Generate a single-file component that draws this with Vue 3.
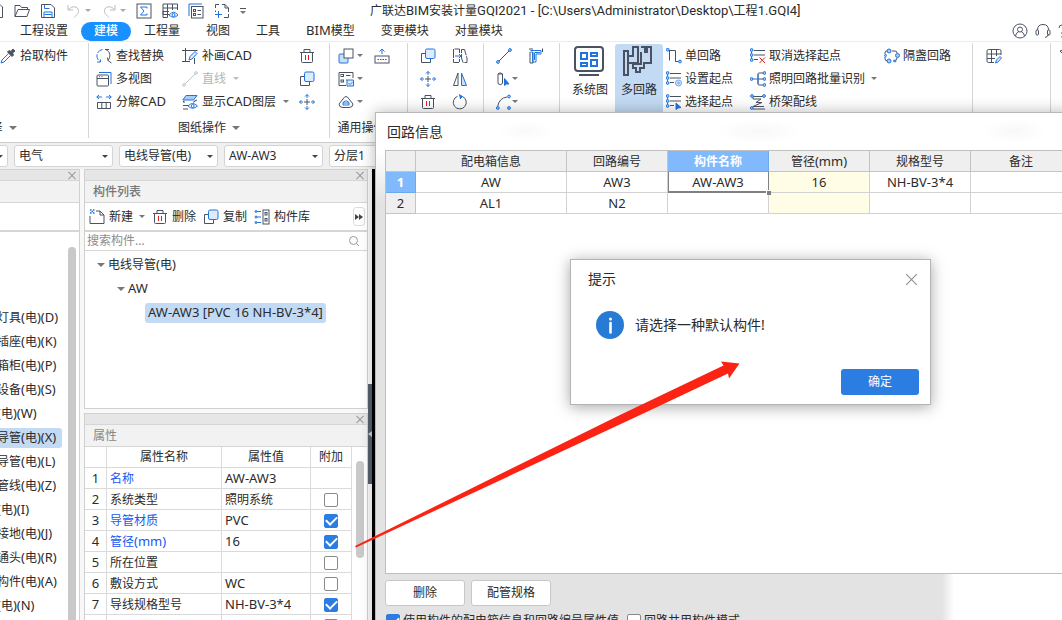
<script setup>
import { h, ref } from 'vue'

const G = '#4a5262'
const B = '#1f74e0'

// Splits mixed text so that Latin runs use their own size beside the Chinese ones
const T = (props) =>
  h('span', { class: 'txt' }, props.v.split(/([\x20-\x7e]+)/).filter(Boolean).map((run) =>
    /^[\x20-\x7e]+$/.test(run) ? h('span', { class: 'lat' }, run) : run))
T.props = ['v']

const dot = (x, y, r = 1.4) => `<circle cx="${x}" cy="${y}" r="${r}" stroke="${B}" fill="#a9cdfa"/>`
const trash = `<path d="M1 4.5H15M5 4V1.5H11V4M2.500 4.500V13.500Q2.500 14.500 3.500 14.500H12.500Q13.500 14.500 13.500 13.500V4.500"/><path d="M6.500 7V12M9.500 7V12" stroke="#e02020"/>`
const copy = `<path d="M6 5.500H1.500V14.500H10.500V10"/><rect x="5.500" y="1" width="9.500" height="9.500" rx="1.500" stroke="${B}" fill="#dcebfd"/>`
const move = `<path d="M5 8H11M8 5V11"/><path d="M8 0.500V4M8 12V15.500M.5 8H4M12 8H15.500M6 2.500 8 .5 10 2.500M6 13.500 8 15.500 10 13.500M2.500 6 .5 8 2.500 10M13.500 6 15.500 8 13.500 10" stroke="${B}"/>`
const startList = `<path d="M4 2.500H15M4 7H15M4 11.500H8"/><path d="M1.500 3V11.500" stroke="${B}"/>${dot(1.6, 2)}${dot(1.6, 7)}${dot(1.6, 12)}`

const icons = {
  open: `<path d="M1 13.500V2.500H6L7.500 4.500H13.500V6.500M1 13.500 4 6.500H15.500L13 13.500Z"/>`,
  save: `<path d="M1.500 1.500H11L14.500 5V14.500H1.500Z"/><path d="M4.500 2V5.500H9.500M4 14V9H12V14M4.500 11.500H11.500" stroke="${B}"/>`,
  undo: `<path d="M2 2V7H7M2.500 6.500C6 2.500 12 3 12.500 7.500C13 11 10 12 8 14.500" stroke="#b9bcc2"/>`,
  redo: `<path d="M14 2V7H9M13.500 6.500C10 2.500 4 3 3.500 7.500C3 11 6 12 8 14.500" stroke="#b9bcc2"/>`,
  sigma: `<rect x="1" y="1" width="14" height="14"/><path d="M11 5.500V4H4.500L8 8 4.500 12H11V10.500" stroke="${B}"/>`,
  gridEye: `<path d="M8 11.500H1V1H15.500V7M1 5H15.500M1 8.500H7M5.500 1V14.500H1V8M10.500 1V7"/><path d="M7 12Q11.500 6.500 16 12Q11.500 16.500 7 12Z" stroke="${B}"/><circle cx="11.500" cy="12" r="1.500" stroke="${B}"/>`,
  listBox: `<rect x="3.500" y="3.500" width="11.500" height="11.500"/><path d="M1 13V1H14" stroke="${B}"/><path d="M9.500 7.500H13M9.500 11.500H13"/><rect x="5.500" y="6.500" width="2" height="2"/><rect x="5.500" y="10.500" width="2" height="2"/>`,
  scanPlus: `<path d="M1.500 5V1.500H5M8 1.500H11L14.500 5V9M11 1.500V5H14.500M14.500 11V14.500H10M1.500 7.500V9"/><path d="M4.500 8V15M1 11.500H8" stroke="${B}"/>`,
  dropper: `<path d="M8.500 5.500 2 12 1 15 4 14 10.500 7.500" stroke="${B}"/><path d="M9 2.500 11 3.500 13 1 15 3 12.500 5 13.500 7 12 8.500 7.500 4Z" fill="${G}"/>`,
  find: `<path d="M6.500 1.500A6.500 6.500 0 0 0 4 13.500M1 14H4.500V10.500" stroke="${B}" stroke-dasharray="6 1.500"/><path d="M9.500 1.500C14.500 3 15 9 12 12.500M9 1.500H13M11.500 9.500 12 12.500 15.500 15"/>`,
  windows: `<rect x="1" y="4" width="11.500" height="11" rx="1"/><path d="M1 7.500H12.500M3 5.700H4M5.500 5.700H6.500"/><path d="M3 1.500H15V13" stroke="${B}"/>`,
  explode: `<path d="M1.500 14.500V8.500H14.500V14.500M1.500 14.500H14.500M5.800 9V14M10.200 9V14"/><path d="M.8 3H6M3 1 .8 3 3 5M15.200 3H10M13 1 15.200 3 13 5" stroke="${B}"/>`,
  patch: `<path d="M0 2.500H15.500M3.500 0V14M0 13.500H8M12.500 10V16"/><path d="M7 12 8 8.500 13 3.500 15 5.500 10 11Z" stroke="${B}" fill="#dcebfd"/>`,
  lineOff: `<path d="M3 13 13 3" stroke="#bfc2c7"/><circle cx="2" cy="14" r="1.300" stroke="#bfc2c7"/><circle cx="14" cy="2" r="1.300" stroke="#bfc2c7"/>`,
  layers: `<path d="M4 1.500H15L11.500 6H.8Z" stroke="${B}" fill="#a9cdfa"/><path d="M3 8H1L2 7M11 8.500 13.500 6.500M1 11.500H6M12 7.500 15 6M1 15H6"/><path d="M6 12Q10.500 7 15.500 12Q10.500 16.500 6 12Z" stroke="${B}"/><circle cx="10.700" cy="12" r="1.500" stroke="${B}"/>`,
  trash,
  copy,
  move,
  copyBack: `<rect x="1" y="6" width="9" height="9" rx="1" stroke="${B}" fill="#c9e0fb"/><rect x="6" y="1" width="9" height="9" fill="#fff"/>`,
  form: `<path d="M8 14.500H1V1.500H15V7M8 4.500H12.500M8 9H9"/><rect x="3" y="3.500" width="2.500" height="2"/><rect x="3" y="9" width="2.500" height="2"/><path d="M9 9H15.500V15H9ZM10.500 12 12 13.500 14.500 11" stroke="${B}" fill="#dcebfd"/>`,
  cap: `<path d="M5 5Q8 0 11 5L15 10Q15 13.500 11 13.500H5Q1 13.500 1 10Z"/><path d="M5 11V8.500L7 7H9L11 8.500V11ZM5 9H11" stroke="${B}"/>`,
  keyUp: `<rect x="1" y="8" width="14" height="7"/><path d="M3.500 11.500H12.500" stroke-dasharray="1.500 1"/><path d="M8 6V1M5.500 3.500 8 1 10.500 3.500" stroke="${B}"/>`,
  stretch: `<path d="M7.500 5V1H1.500V14.500H7.500V11M9.500 1.500H12.500L15 10V14.500H11L9.500 10Z" stroke-dasharray="9 1"/><path d="M3 8H9M7 6 9 8 7 10" stroke="${B}"/>`,
  mirror: `<path d="M6 2V14.500H1.500Z"/><path d="M9.500 2V14.500H14.500Z" stroke="${B}" fill="#c9e0fb"/>`,
  rotate: `<path d="M10.500 2.500A6.500 6.500 0 1 1 5.500 2.300"/><path d="M7 .5 10.500 2.500 8 5" stroke="${B}" fill="${B}"/>`,
  line: `<path d="M3 13 13 3"/>${dot(2, 14)}${dot(14, 2)}`,
  pillar: `<path d="M2 3V12.500Q4 15 6.500 12.500V3ZM2 3Q4 .5 6.500 3"/><path d="M8.500 7.500V14.500L10.500 13 13 13Z" stroke="${B}" fill="${B}"/>`,
  arc: `<path d="M1.500 13Q3 4 11 3"/>${dot(1.800, 14)}${dot(13, 2.500)}${dot(13, 14)}`,
  pipe: `<path d="M1 1H5M2 4V15H5V4M14.500 4V.5"/><path d="M2.500 4H4.500V14H8V6H13V2.500H2.500M6.500 5V12M6.500 4.500H12" stroke="${B}"/>`,
  single: `<path d="M3.500 2.500V12.500M2.500 2.500H9.500V13.500H14" /><path d="M1 1.500H3" stroke="${B}"/>${dot(1.700, 1.700)}${dot(14, 13.500)}`,
  setStart: startList + `<circle cx="12.500" cy="12" r="3" stroke="#6aa5f2" fill="#dcebfd"/><circle cx="12.500" cy="12" r="1" stroke="#6aa5f2"/>`,
  pickStart: startList + `<path d="M10 9V15.500L12 14 15 13.500Z" stroke="${B}" fill="${B}"/>`,
  dropStart: startList + `<path d="M9.500 9.500 15 15M15 9.500 9.500 15" stroke="#e02020"/>`,
  branch: `<path d="M13 2H9Q8 2 8 3V13Q8 14 9 14H13M8 8H13" /><path d="M3 8H8V3M8 8V13" stroke="${B}"/>${dot(1.500, 8)}${dot(14.500, 2)}${dot(14.500, 8)}${dot(14.500, 14)}`,
  tray: `<path d="M3 2.500H14M3 2.500V5H11L6 8.500H12L3 12.500H14M3 15H15M1 14V15" />${dot(2, 2)}${dot(14, 2)}${dot(1.800, 14)}`,
  relay: `<path d="M4 3H2Q1 3 1 5V6M1 9V11Q1 13 4 13M8 3H11Q13 3 13 5M13 10Q13 13 9 13"/>${dot(5, 3, 2)}${dot(13.500, 7.500, 2)}${dot(5, 13, 2)}${dot(1.500, 7.500, 1)}${dot(11, 13, 1)}`,
  gridPen: `<path d="M8 14.500H2.500Q1 14.500 1 13V3Q1 1.500 2.500 1.500H13.500Q15 1.500 15 3V7M1 6H15M1 10.500H9M5.500 1.500V14.500M10.500 1.500V8"/><path d="M9.500 15 10.500 12 14 8.500 15.500 10 12 14Z" stroke="${B}" fill="#dcebfd"/>`,
  star: `<path d="M1 3 5 1.500M1 3 6 8"/>`,
  fresh: `<path d="M7 2H11L15 6V14.500H1V7M11 2V6H15"/><path d="M1 1H2.500M4 1H5.500M2.500 2.500H4M1 4H2.500M4 4H5.500" stroke="${B}" stroke-width="1.500"/>`,
  library: `<rect x="9" y="1" width="6" height="14"/><rect x="11" y="3.500" width="2" height="2.500"/><rect x="11" y="9.500" width="2" height="2.500"/><path d="M3 2.500H7M3 8H7M3 13.500H7" stroke="${B}"/>${dot(2, 2.500, 1)}${dot(2, 8, 1)}${dot(2, 13.500, 1)}`,
  user: `<circle cx="8" cy="8" r="7"/><circle cx="8" cy="6.500" r="2.500"/><path d="M3.500 13Q4 9.500 6.500 9M12.500 13Q12 9.500 9.500 9"/>`,
  headset: `<path d="M2.500 7Q2.500 1.500 8 1.500T13.500 7M13.500 11Q13 14 10 14.500"/><rect x="1" y="7" width="2.500" height="5" rx="1"/><rect x="12.500" y="7" width="2.500" height="5" rx="1"/>`,
  help: `<path d="M1 5Q1 2 4 2T7 5Q7 7 4 9V11M4 13V14.500"/>`,
  doc: `<path d="M-8 1.500H0L2.500 4V14.500H-8"/>`,
  search: `<circle cx="7.500" cy="7.500" r="4" stroke="#999"/><path d="M10.500 10.500 13 13" stroke="#999"/>`,
}

const quick = [
  { n: 'open' }, { n: 'save' }, { n: 'undo', c: 1 }, { n: 'redo', c: 1 },
  { n: 'sigma' }, { n: 'gridEye' }, { n: 'listBox' }, { n: 'scanPlus' },
]
const tabs = ['工程设置', '建模', '工程量', '视图', '工具', 'BIM模型', '变更模块', '对量模块']
const active = ref('建模')

const groups = [
  { k: 'g-pick', label: '选择', cols: [[{ i: 'dropper', t: '拾取构件' }]] },
  { k: 'g-draw', label: '图纸操作', cols: [
    [{ i: 'find', t: '查找替换' }, { i: 'windows', t: '多视图' }, { i: 'explode', t: '分解CAD' }],
    [{ i: 'patch', t: '补画CAD' }, { i: 'lineOff', t: '直线', c: 1, off: 1 }, { i: 'layers', t: '显示CAD图层', c: 1 }],
    [{ i: 'trash' }, { i: 'copy' }, { i: 'move' }],
  ] },
  { k: 'g-common', label: '通用操作', cols: [
    [{ i: 'copyBack', c: 1 }, { i: 'form', c: 1 }, { i: 'cap', c: 1 }],
    [{ i: 'keyUp' }],
  ] },
  { k: 'g-edit', cols: [
    [{ i: 'copy' }, { i: 'move' }, { i: 'trash' }],
    [{ i: 'stretch' }, { i: 'mirror' }, { i: 'rotate' }],
  ] },
  { k: 'g-line', cols: [
    [{ i: 'line' }, { i: 'pillar', c: 1 }, { i: 'arc', c: 1 }],
    [{ i: 'pipe' }],
  ] },
  { k: 'g-detect', big: true, cols: [
    [{ i: 'single', t: '单回路' }, { i: 'setStart', t: '设置起点' }, { i: 'pickStart', t: '选择起点' }],
    [{ i: 'dropStart', t: '取消选择起点' }, { i: 'branch', t: '照明回路批量识别', c: 1 }, { i: 'tray', t: '桥架配线' }],
    [{ i: 'relay', t: '隔盏回路' }],
  ] },
  { k: 'g-check', cols: [[{ i: 'gridPen' }]] },
  { k: 'g-last', cols: [[{ i: 'star' }]] },
]

const filters = ['首层', '电气', '电线导管(电)', 'AW-AW3', '分层1']

const kinds = ['照明灯具(电)(D)', '开关插座(电)(K)', '配电箱柜(电)(P)', '电气设备(电)(S)', '桥架(电)(W)',
  '电线导管(电)(X)', '电缆导管(电)(L)', '综合管线(电)(Z)', '母线(电)(I)', '防雷接地(电)(J)', '桥架通头(电)(R)',
  '零星构件(电)(A)', '孔洞(电)(N)']

const tools = [
  { i: 'fresh', t: '新建', c: 1 }, { i: 'trash', t: '删除' }, { i: 'copy', t: '复制' }, { i: 'library', t: '构件库' },
]

const props = ref([
  { n: '名称', v: 'AW-AW3', key: 1, on: null },
  { n: '系统类型', v: '照明系统', on: false },
  { n: '导管材质', v: 'PVC', key: 1, on: true },
  { n: '管径(mm)', v: '16', key: 1, on: true },
  { n: '所在位置', v: '', on: false },
  { n: '敷设方式', v: 'WC', on: false },
  { n: '导线规格型号', v: 'NH-BV-3*4', on: true },
  { n: '', v: '', on: false },
])

const heads = ['配电箱信息', '回路编号', '构件名称', '管径(mm)', '规格型号', '备注']
const rows = [['AW', 'AW3', 'AW-AW3', '16', 'NH-BV-3*4', ''], ['AL1', 'N2', '', '', '', '']]
const useProps = ref(true)
const shared = ref(false)
</script>

<template>
  <div class="app">
    <header class="titlebar">
      <div class="quick">
        <svg class="ic first" viewBox="0 0 4 16" v-html="icons.doc" />
        <button v-for="q in quick" :key="q.n" class="qbtn" :aria-label="q.n">
          <svg class="ic" viewBox="0 0 16 16" v-html="icons[q.n]" /><i v-if="q.c" class="caret pale" />
        </button>
        <button class="qbtn more" aria-label="more"><i class="bar" /><i class="caret" /></button>
      </div>
      <div class="title"><T v="广联达BIM安装计量GQI2021 - [C:\Users\Administrator\Desktop\工程1.GQI4]" /></div>
    </header>

    <nav class="tabs">
      <button v-for="t in tabs" :key="t" class="tab" :class="{ on: t === active }" @click="active = t"><T :v="t" /></button>
      <div class="account">
        <button v-for="n in ['user', 'headset', 'help']" :key="n" :aria-label="n"><svg class="ic" viewBox="0 0 16 16" v-html="icons[n]" /></button>
      </div>
    </nav>

    <section class="ribbon">
      <div v-for="g in groups" :key="g.k" class="group" :class="g.k">
        <div class="cols">
          <template v-if="g.big">
            <button class="big">
              <svg viewBox="0 0 32 32"><rect x="1" y="2" width="28" height="24" rx="3" fill="#fff" stroke="#4a5262" stroke-width="2" /><path d="M5 30H25" stroke="#4a5262" stroke-width="2" /><path d="M7 8H13V14H7ZM17 8H23V11H17ZM7 18H13V21H7ZM17 15H23V21H17Z" fill="none" stroke="#1f74e0" stroke-width="2" /></svg>
              <span>系统图</span>
            </button>
            <button class="big sel">
              <svg viewBox="0 0 32 32"><path d="M1 6H5V11H10V2H15V18H5V30H1ZM5 11V18M18 2H22V7H24V2H28V18H21V23H17V27H13V23H10V19H18V7" fill="none" stroke="#4a5262" stroke-width="2" /></svg>
              <span>多回路</span>
            </button>
          </template>
          <div v-for="(c, ci) in g.cols" :key="ci" class="col">
            <button v-for="b in c" :key="b.i" class="rbtn" :class="{ off: b.off }" :aria-label="b.t || b.i">
              <svg class="ic" viewBox="0 0 16 16" v-html="icons[b.i]" /><T v-if="b.t" :v="b.t" /><i v-if="b.c" class="caret" />
            </button>
          </div>
        </div>
        <div v-if="g.label" class="glabel"><span>{{ g.label }}</span><i class="caret wide" /></div>
      </div>
    </section>

    <div class="filters">
      <label v-for="f in filters" :key="f" class="combo">
        <select :aria-label="f"><option>{{ f }}</option></select><i class="caret dark" />
      </label>
    </div>

    <main class="work">
      <aside class="kinds">
        <div class="strip"><button class="x" aria-label="关闭" /></div>
        <div class="ptitle" />
        <div class="tools" />
        <div class="kindbox">
          <ul>
            <li v-for="k in kinds" :key="k" :class="{ on: k.endsWith('(X)') }"><T :v="k" /></li>
          </ul>
          <div class="thumb" />
        </div>
      </aside>

      <div class="middle">
        <section class="panel list">
          <div class="strip"><button class="x" aria-label="关闭" /></div>
          <h2 class="ptitle bold">构件列表</h2>
          <div class="tools">
            <button v-for="t in tools" :key="t.t" class="tool"><svg class="ic" viewBox="0 0 16 16" v-html="icons[t.i]" /><span>{{ t.t }}</span><i v-if="t.c" class="caret" /></button>
            <button class="next" aria-label="更多"><i /><i /></button>
          </div>
          <div class="search">
            <input type="text" placeholder="搜索构件..." aria-label="搜索构件">
            <svg class="ic" viewBox="0 0 16 16" v-html="icons.search" />
          </div>
          <div class="tree">
            <div class="node n1"><i class="caret wide" /><T v="电线导管(电)" /></div>
            <div class="node n2"><i class="caret wide" /><T v="AW" /></div>
            <div class="node n3"><T class="pick" v="AW-AW3 [PVC 16 NH-BV-3*4]" /></div>
          </div>
        </section>

        <section class="panel props">
          <div class="strip"><button class="x" aria-label="关闭" /></div>
          <h2 class="ptitle">属性</h2>
          <div class="propbox">
            <table>
              <colgroup><col class="p0"><col class="p1"><col class="p2"><col class="p3"></colgroup>
              <thead><tr><th /><th>属性名称</th><th>属性值</th><th>附加</th></tr></thead>
              <tbody>
                <tr v-for="(p, i) in props" :key="i">
                  <td class="mid"><T v-if="p.n" :v="String(i + 1)" /></td>
                  <td :class="{ key: p.key }"><T :v="p.n" /></td>
                  <td><T :v="p.v" /></td>
                  <td class="mid"><input v-if="p.on !== null" v-model="p.on" type="checkbox" :aria-label="p.n || '附加'"></td>
                </tr>
              </tbody>
            </table>
            <div class="rail"><div class="thumb" /></div>
          </div>
        </section>
      </div>

      <div class="splitter"><button aria-label="折叠" /></div>
      <div class="canvas" />
    </main>

    <section class="window" role="dialog" aria-label="回路信息">
      <h1>回路信息</h1>
      <div class="sheet">
        <table>
          <colgroup><col class="c0"><col class="c1"><col><col><col><col><col></colgroup>
          <thead><tr><th /><th v-for="t in heads" :key="t" :class="{ on: t === '构件名称' }"><T :v="t" /></th></tr></thead>
          <tbody>
            <tr v-for="(r, i) in rows" :key="i">
              <th :class="{ on: i === 0 }"><T :v="String(i + 1)" /></th>
              <td v-for="(c, j) in r" :key="j" :class="{ soft: j === 3, cell: i === 0 && j === 2 }"><T :v="c" /><i v-if="i === 0 && j === 2" class="grip" /></td>
            </tr>
          </tbody>
        </table>
      </div>
      <div class="actions"><button>删除</button><button>配管规格</button></div>
      <div class="options">
        <label><input v-model="useProps" type="checkbox"><span>使用构件的配电箱信息和回路编号属性值</span></label>
        <label><input v-model="shared" type="checkbox"><span>回路共用构件模式</span></label>
      </div>
    </section>

    <section class="prompt" role="alertdialog" aria-label="提示">
      <div class="phead"><span>提示</span><button class="x large" aria-label="关闭" /></div>
      <div class="pbody">
        <svg viewBox="0 0 28 28"><circle cx="14" cy="14" r="14" fill="#277bd5" /><circle cx="14.500" cy="8" r="1.500" fill="#fff" /><path d="M14.500 12V21.500" stroke="#fff" stroke-width="2.600" stroke-linecap="round" /></svg>
        <p>请选择一种默认构件!</p>
      </div>
      <div class="pfoot"><button>确定</button></div>
    </section>

    <svg class="pointer" width="400" height="200" viewBox="350 356 400 200" aria-hidden="true"><path d="M355 546 622 414 723.500 365.500 721 361.500 739.500 363.500 729 378.500 728 373.500 638 416 356 547.500Z" fill="#fb2314" /></svg>
  </div>
</template>

<style>
body { margin: 0; overflow: hidden; }
.txt { white-space: pre; }
.txt .lat { font-size: 13px; line-height: 1; }
.title .lat { font-family: Roboto, sans-serif; }
</style>

<style scoped>
.app { position: relative; display: flex; flex-direction: column; height: 100vh; overflow: hidden; background: #fff; color: #2b2b2b; font: 12px/16px "Noto Sans", "Noto Sans CJK SC", sans-serif; }
.app * { box-sizing: border-box; }
button { display: flex; align-items: center; padding: 0; border: 0; background: none; color: inherit; font: inherit; white-space: nowrap; }
.ic { flex: none; width: 16px; height: 16px; fill: none; stroke: #4a5262; stroke-width: 1; }
.caret { flex: none; width: 0; height: 0; border: 3px solid transparent; border-top-color: #777; border-bottom: 0; }
.caret.pale { border-top-color: #aaa; }
.caret.dark { border-top-color: #444; }
.caret.wide { border-width: 4px 4px 0; }

.titlebar { display: flex; align-items: center; flex: none; height: 21px; overflow: hidden; }
.quick { display: flex; align-items: center; gap: 10px; flex: none; width: 370px; }
.quick .first { width: 4px; }
.qbtn { gap: 3px; }
.more { flex-direction: column; gap: 2px; }
.bar { width: 6px; height: 1px; background: #555; }
.title { white-space: nowrap; }

.tabs { display: flex; align-items: center; flex: none; height: 21px; padding: 0 0 0 7px; border-bottom: 1px solid #ececec; }
.tab { height: 19px; padding: 0 13px; border-radius: 10px; }
.tab.on { background: #1890ff; color: #fff; font-weight: 500; }
.account { display: flex; gap: 7px; margin: 0 -12px 0 auto; }

.ribbon { display: flex; flex: none; height: 101px; border-bottom: 1px solid #ccc; overflow: hidden; }
.group { display: flex; flex-direction: column; flex: none; margin: 1px 0 4px; border-right: 1px solid #d6d6d6; }
.cols { display: flex; height: 72px; padding-top: 1px; }
.col { display: flex; flex-direction: column; }
.rbtn { gap: 4px; height: 23px; }
.rbtn .caret { margin-left: 3px; }
.rbtn.off { color: #b4b4b4; }
.rbtn.off .caret { border-top-color: #bbb; }
.glabel { display: flex; align-items: center; justify-content: center; gap: 6px; flex: 1; padding-top: 3px; }
.g-pick { width: 182px; margin-left: -93px; }
.g-pick .cols { padding-left: 93px; }
.g-draw { width: 241px; }
.g-draw .cols { padding-left: 7px; }
.g-draw .col:nth-child(1) { width: 86px; }
.g-draw .col:nth-child(2) { width: 117px; }
.g-common { width: 78px; }
.g-common .cols { padding-left: 8px; }
.g-common .col:nth-child(1) { width: 36px; }
.g-common .caret, .g-line .caret { margin-left: 0; }
.g-common .rbtn { gap: 3px; }
.g-edit { width: 76px; }
.g-edit .cols { padding-left: 12px; }
.g-edit .col:nth-child(1) { width: 32px; }
.g-line { width: 76px; }
.g-line .cols { padding-left: 12px; }
.g-line .col:nth-child(1) { width: 32px; }
.g-line .rbtn { gap: 0; }
.g-detect { width: 413px; }
.g-detect .cols { padding-left: 6px; }
.g-detect .col { width: 84px; }
.g-detect .big + .col { margin-left: 3px; }
.g-detect .col:nth-child(4) { width: 134px; }
.g-detect .rbtn { gap: 3px; }
.big { flex-direction: column; width: 48px; height: 76px; padding-top: 1px; border-radius: 3px; gap: 5px; }
.big svg { width: 32px; height: 32px; }
.big.sel { background: #c2daf3; }
.big + .big { margin-left: 1px; }
.g-check { width: 78px; }
.g-check .cols { padding-left: 13px; }
.g-last { width: 60px; border: 0; }
.g-last .cols { padding-left: 8px; }

.filters { display: flex; align-items: center; gap: 6px; flex: none; height: 26px; padding-left: 14px; background: #f0f0f0; overflow: hidden; }
.combo { display: grid; align-items: center; flex: none; width: 99px; }
.combo:first-child { margin-left: -105px; }
.combo > * { grid-area: 1 / 1; }
.combo .caret { justify-self: end; margin-right: 5px; }
select { appearance: none; width: 100%; height: 22px; padding: 0 4px; border: 1px solid #d4d4d4; border-radius: 3px; background: #fff; color: inherit; font: inherit; }

.work { display: flex; flex: 1; min-height: 0; background: #f8f8f8; }
.strip { display: flex; align-items: center; justify-content: flex-end; flex: none; height: 11px; padding-right: 3px; border-bottom: 1px solid #d6d6d6; background: #e6e6e6; }
.x { display: grid; width: 9px; height: 9px; }
.x::before, .x::after { content: ""; grid-area: 1 / 1; place-self: center; width: 10px; height: 1px; background: #999; transform: rotate(45deg); }
.x::after { transform: rotate(-45deg); }
.x.large { width: 14px; height: 14px; }
.x.large::before, .x.large::after { width: 15px; background: #8a8a8a; }
.ptitle { display: flex; align-items: center; flex: none; height: 22px; margin: 0; padding-left: 8px; border-bottom: 1px solid #d6d6d6; background: #f2f2f2; color: #888; font-size: 12px; font-weight: 400; }
.ptitle.bold { font-weight: 500; color: #777; }
.tools { display: flex; align-items: center; flex: none; gap: 7px; height: 28px; padding: 0 2px 0 4px; border-bottom: 1px solid #d6d6d6; background: #fff; }
.tool { gap: 4px; }
.tool .caret { margin-left: 2px; }
.next { justify-content: center; width: 12px; height: 19px; margin-left: auto; border: 1px solid #ddd; border-radius: 3px; }
.next i { border: 3px solid transparent; border-left: 4px solid #444; border-right: 0; }

.kinds { display: flex; flex-direction: column; flex: none; width: 80px; border: solid #d0d0d0; border-width: 1px 1px 0 0; background: #fff; overflow: hidden; }
.kindbox { display: flex; flex: 1; min-height: 0; padding-right: 3px; border-top: 1px solid #d6d6d6; }
.kindbox ul { flex: none; width: 89px; margin: 0 6px 0 -27px; padding: 74px 0 0; list-style: none; }
.kinds li { display: flex; align-items: center; height: 24px; }
.kinds li.on { border-radius: 3px; background: #c2daf3; height: 20px; margin: 2px 0; }
.thumb { width: 8px; border-radius: 4px; background: #c9c9c9; }
.kindbox .thumb { margin-top: 15px; border-radius: 4px 4px 0 0; }

.middle { display: flex; flex-direction: column; gap: 4px; flex: none; width: 284px; margin-left: 4px; }
.panel { display: flex; flex-direction: column; border: 1px solid #d0d0d0; background: #fff; }
.list { flex: none; height: 240px; }
.search { display: flex; align-items: center; flex: none; height: 20px; padding-right: 5px; border: solid #d6d6d6; border-width: 1px 0; }
.search input { flex: 1; min-width: 0; padding: 0 2px; border: 0; outline: 0; font: inherit; }
.search input::placeholder { color: #8c8c8c; }
.tree { padding-top: 2px; }
.node { display: flex; align-items: center; gap: 3px; height: 24px; }
.n1 { padding-left: 12px; }
.n2 { padding-left: 32px; }
.n3 { padding-left: 60px; }
.pick { padding: 2px 3px; border-radius: 3px; background: #c2daf3; }
.props { flex: 1; min-height: 0; border-bottom: 0; overflow: hidden; }
.propbox { display: flex; min-height: 0; }
table { border-collapse: separate; border-spacing: 0; table-layout: fixed; }
.propbox table { flex: none; width: 267px; }
.p0 { width: 22px; } .p1 { width: 115px; } .p2 { width: 89px; } .p3 { width: 41px; }
th, td { height: 21px; padding: 0; font-weight: 400; line-height: 16px; white-space: nowrap; }
.propbox th, .propbox td { border: solid #dadada; border-width: 0 1px 1px 0; }
.propbox td { padding: 1px 0 0 3px; }
.propbox td.mid { padding-left: 0; text-align: center; }
.propbox td.key { color: #1659f5; }
.propbox input { margin: 0 auto; }
.rail { padding: 14px 0 0 4px; }
.rail .thumb { height: 97px; }
input[type="checkbox"] { display: grid; place-items: center; appearance: none; flex: none; width: 14px; height: 14px; margin: 0; border: 1px solid #8a8a8a; border-radius: 2px; background: #fff; }
.propbox input[type="checkbox"] { margin: 0 auto; }
input[type="checkbox"]:checked { border-color: #2b7de1; background: #2b7de1; }
input[type="checkbox"]:checked::before { content: ""; width: 9px; height: 5px; border: solid #fff; border-width: 0 0 2px 2px; transform: translateY(-1px) rotate(-45deg); }

.splitter { flex: none; width: 4px; padding-top: 215px; }
.splitter button { width: 4px; height: 100px; background: #555e6c; }
.splitter button::before { content: ""; border: 3px solid transparent; border-right: 4px solid #ccc; border-left: 0; }
.canvas { flex: 1; background: #000; }

.window { position: absolute; inset: 112px -26px -33px 375px; display: flex; flex-direction: column; padding: 0 14px 23px 9px; border: 1px solid #b8b8b8; background: radial-gradient(ellipse 28px 10px at 150px 18px, #f9f9f9, transparent), radial-gradient(ellipse 44px 12px at 383px 18px, #f8f8f8, transparent), radial-gradient(ellipse 32px 12px at 638px 18px, #f8f8f8, transparent), linear-gradient(#fff 40px, transparent 90px), linear-gradient(90deg, #e3e3e3 566px, #fff 578px); box-shadow: 0 0 14px rgba(0, 0, 0, .28); }
.window h1 { display: flex; align-items: center; flex: none; height: 37px; margin: 0; padding-left: 2px; font-size: 14px; font-weight: 400; }
.sheet { flex: 1; min-height: 0; border: 1px solid #bfbfbf; background: #fff; }
.sheet table { width: 100%; }
.c0 { width: 30px; } .c1 { width: 151px; }
.sheet th, .sheet td { padding-top: 1px; border: solid #d2d2d2; border-width: 0 1px 1px 0; text-align: center; }
.sheet th { border-color: #c4c4c4; background: #efefef; }
.sheet th.on { border-color: #6aa9ee; background: #80bafc; color: #fff; font-weight: 700; }
.sheet .soft { background: #fffde6; }
.sheet .cell { position: relative; box-shadow: inset 1px 0 #808080, inset 0 -1px #808080; border-color: #808080; }
.grip { position: absolute; right: -3px; bottom: -3px; width: 5px; height: 5px; border: solid #fff; border-width: 1px 0 0 1px; background: #808080; }
.actions { display: flex; gap: 6px; flex: none; margin: 6px 0 7px; }
.actions button { justify-content: center; width: 80px; height: 26px; border: 1px solid #c8c8c8; border-radius: 3px; background: #fff; }
.options { display: flex; gap: 8px; flex: none; padding-left: 1px; height: 16px; }
.options label { display: flex; align-items: center; gap: 3px; white-space: nowrap; }

.prompt { position: absolute; top: 259px; left: 570px; display: flex; flex-direction: column; width: 361px; padding: 9px 11px; border: 1px solid #b4b4b4; background: #fff; box-shadow: 0 2px 14px rgba(0, 0, 0, .35); font-size: 14px; }
.phead { display: flex; align-items: center; justify-content: space-between; height: 20px; padding: 0 1px 0 6px; }
.pbody { display: flex; align-items: center; gap: 11px; margin: 22px 0 30px 14px; }
.pbody svg { width: 28px; height: 28px; }
.pbody p { margin: 0; }
.pfoot { display: flex; justify-content: flex-end; }
.pfoot button { justify-content: center; width: 78px; height: 26px; border-radius: 3px; background: #2b7de1; color: #fff; font-size: 12px; }
.pointer { position: absolute; top: 356px; left: 350px; pointer-events: none; }
</style>
